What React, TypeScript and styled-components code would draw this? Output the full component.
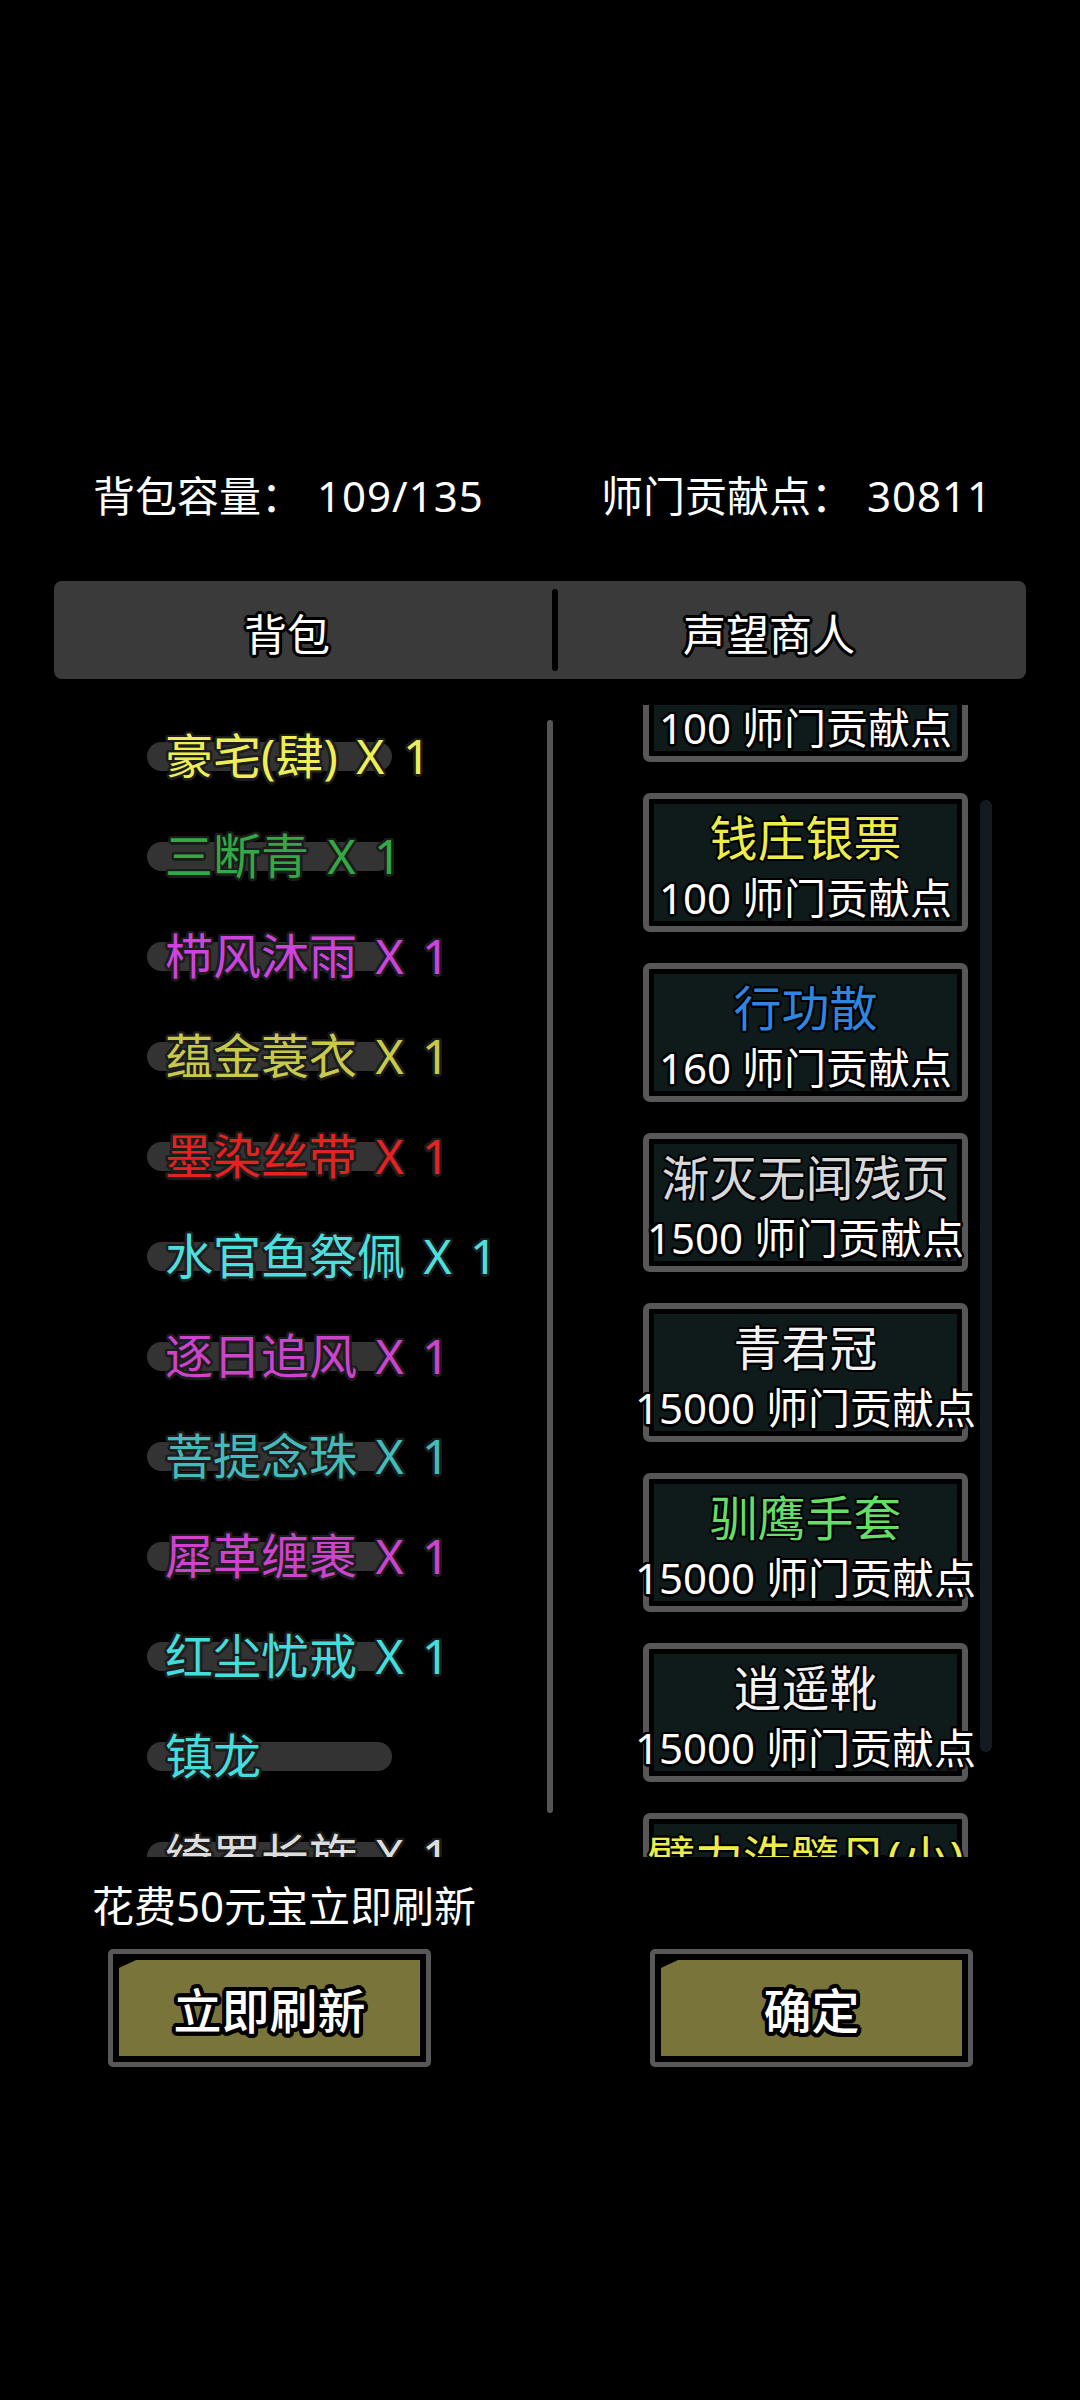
import React from 'react'
import styled, { createGlobalStyle } from 'styled-components'

const GlobalStyle = createGlobalStyle`
  html, body {
    margin: 0;
    padding: 0;
    background: #000;
  }
  body {
    font-family: "Noto Sans", "Noto Sans CJK SC", sans-serif;
    color: #fff;
  }
`

// ring of shadows, used as a text stroke
const outline = (color: string, w: number) => {
  const parts: string[] = []
  for (let i = 0; i < 16; i++) {
    const a = (i / 16) * Math.PI * 2
    parts.push(`${(Math.cos(a) * w).toFixed(1)}px ${(Math.sin(a) * w).toFixed(1)}px 0 ${color}`)
  }
  return parts.join(', ')
}

const Page = styled.div`
  width: 1080px;
  height: 2400px;
  display: flex;
  flex-direction: column;
  background: #000;
`

const Header = styled.div`
  display: grid;
  grid-template-columns: 508px auto;
  padding: 466px 0 0 93px;
  font-size: 42px;
  line-height: 60px;
  white-space: nowrap;
`

const Stat = styled.div`
  display: flex;
`

const StatValue = styled.span`
  margin-left: 14px;
  letter-spacing: 1px;
`

const Tabs = styled.div`
  display: grid;
  grid-template-columns: 498px 6px 1fr;
  height: 98px;
  margin: 55px 54px 0;
  background: #3a3a3a;
  border-radius: 8px;
`

const TabCell = styled.div<{ $shift: number }>`
  display: flex;
  align-items: center;
  justify-content: center;
  padding: 10px ${(p) => p.$shift}px 0 0;
  font-size: 43px;
  line-height: 60px;
  text-shadow: ${outline('#000', 3)};
`

const TabDivider = styled.div`
  margin: 8px 0;
  background: #000;
  border-radius: 3px;
`

const Content = styled.div`
  display: grid;
  grid-template-columns: 600px 480px;
  height: 1152px;
  margin-top: 26px;
`

const LeftPane = styled.div`
  position: relative;
  overflow: hidden;
`

const ItemList = styled.ul`
  list-style: none;
  margin: 0;
  padding: 1px 0 0;
`

const ItemRow = styled.li<{ $color: string }>`
  position: relative;
  display: flex;
  align-items: center;
  height: 100px;
  padding-left: 165px;
  font-size: 48px;
  color: ${(p) => p.$color};
  white-space: nowrap;

  &::before {
    content: '';
    position: absolute;
    left: 147px;
    top: 50%;
    width: 245px;
    height: 29px;
    margin-top: -14px;
    border-radius: 15px;
    background: #333;
  }
`

const ItemName = styled.span`
  position: relative;
  line-height: 60px;
  word-spacing: 6px;
  text-shadow: ${outline('#1c1c1c', 2.5)};
`

const LeftScroll = styled.div`
  position: absolute;
  left: 547px;
  top: 15px;
  width: 6px;
  height: 1093px;
  border-radius: 3px;
  background: #555;
`

const RightPane = styled.div`
  position: relative;
  overflow: hidden;
`

const CardList = styled.div`
  display: flex;
  flex-direction: column;
  gap: 31px;
  margin-top: -82px;
  padding-left: 43px;
`

const Card = styled.div`
  box-sizing: border-box;
  width: 325px;
  height: 139px;
  padding: 5px;
  border: 6px solid #575757;
  border-radius: 7px;
  background: #000;
`

const CardFill = styled.div`
  box-sizing: border-box;
  height: 100%;
  display: flex;
  flex-direction: column;
  align-items: center;
  padding-top: 4px;
  background: #0f1b1b;
`

const CardName = styled.div<{ $color: string }>`
  font-size: 48px;
  line-height: 60px;
  color: ${(p) => p.$color};
  white-space: nowrap;
  text-shadow: ${outline('#000', 2)};
`

const CardPrice = styled.div`
  font-size: 42px;
  line-height: 60px;
  white-space: nowrap;
  text-shadow: ${outline('#000', 2.5)};
`

const RightScroll = styled.div`
  position: absolute;
  left: 380px;
  top: 95px;
  width: 12px;
  height: 952px;
  border-radius: 6px;
  background: #131a22;
`

const CostText = styled.div`
  margin-top: 19px;
  padding-left: 92px;
  font-size: 42px;
  line-height: 60px;
`

const ButtonRow = styled.div`
  display: flex;
  gap: 219px;
  margin-top: 13px;
  padding-left: 108px;
`

const GameButton = styled.div`
  box-sizing: border-box;
  width: 323px;
  height: 118px;
  padding: 6px;
  border: 5px solid #585858;
  border-radius: 5px;
  background: #000;
`

const ButtonFill = styled.div`
  height: 100%;
  display: flex;
  align-items: center;
  justify-content: center;
  background: #78743a;
  clip-path: polygon(17px 0, 100% 0, 100% 100%, 0 100%, 0 8px);
  font-size: 48px;
  font-weight: 500;
  text-shadow: ${outline('#000', 4)};
`

const bagItems = [
  { name: '豪宅(肆) X 1', color: '#eeee55' },
  { name: '三断青 X 1', color: '#33a844' },
  { name: '栉风沐雨 X 1', color: '#cc44dd' },
  { name: '蕴金蓑衣 X 1', color: '#c8c84a' },
  { name: '墨染丝带 X 1', color: '#e52222' },
  { name: '水官鱼祭佩 X 1', color: '#4ddede' },
  { name: '逐日追风 X 1', color: '#cc44cc' },
  { name: '菩提念珠 X 1', color: '#44bbbb' },
  { name: '犀革缠裹 X 1', color: '#cc44cc' },
  { name: '红尘忧戒 X 1', color: '#44dddd' },
  { name: '镇龙', color: '#44dddd' },
  { name: '绮罗长旆 X 1', color: '#dddddd' },
]

const shopItems = [
  { name: '钱庄银票', color: '#eded4a', price: 100 },
  { name: '钱庄银票', color: '#eded4a', price: 100 },
  { name: '行功散', color: '#2e86e0', price: 160 },
  { name: '渐灭无闻残页', color: '#d8d8d8', price: 1500 },
  { name: '青君冠', color: '#f2f2f2', price: 15000 },
  { name: '驯鹰手套', color: '#66dd66', price: 15000 },
  { name: '逍遥靴', color: '#f2f2f2', price: 15000 },
  { name: '臂力洗髓丹(小)', color: '#eded4a', price: 15000 },
]

export default function App() {
  return (
    <Page>
      <GlobalStyle />
      <Header>
        <Stat>
          背包容量：<StatValue>109/135</StatValue>
        </Stat>
        <Stat>
          师门贡献点：<StatValue>30811</StatValue>
        </Stat>
      </Header>

      <Tabs>
        <TabCell $shift={32}>背包</TabCell>
        <TabDivider />
        <TabCell $shift={46}>声望商人</TabCell>
      </Tabs>

      <Content>
        <LeftPane>
          <ItemList>
            {bagItems.map((item, i) => (
              <ItemRow key={i} $color={item.color}>
                <ItemName>{item.name}</ItemName>
              </ItemRow>
            ))}
          </ItemList>
          <LeftScroll />
        </LeftPane>

        <RightPane>
          <CardList>
            {shopItems.map((item, i) => (
              <Card key={i}>
                <CardFill>
                  <CardName $color={item.color}>{item.name}</CardName>
                  <CardPrice>{item.price} 师门贡献点</CardPrice>
                </CardFill>
              </Card>
            ))}
          </CardList>
          <RightScroll />
        </RightPane>
      </Content>

      <CostText>花费50元宝立即刷新</CostText>
      <ButtonRow>
        <GameButton>
          <ButtonFill>立即刷新</ButtonFill>
        </GameButton>
        <GameButton>
          <ButtonFill>确定</ButtonFill>
        </GameButton>
      </ButtonRow>
    </Page>
  )
}
